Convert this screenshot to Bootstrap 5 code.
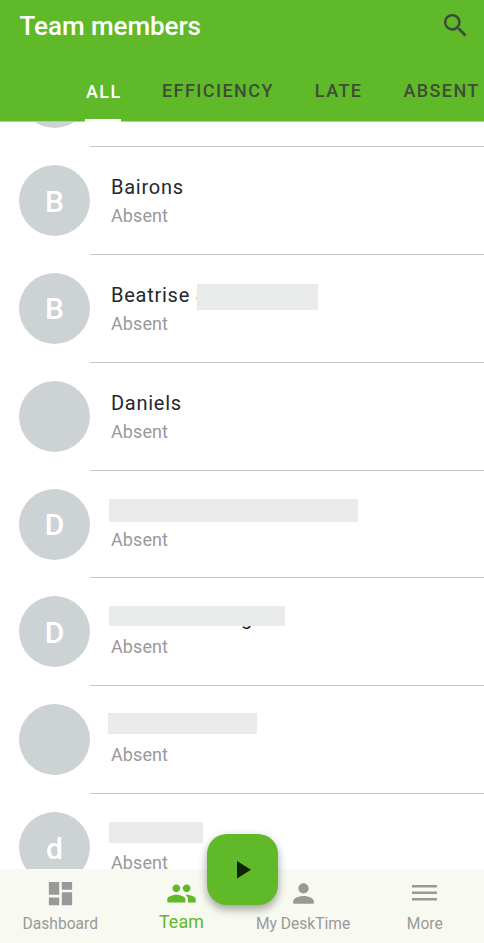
<!DOCTYPE html>
<html lang="en">
<head>
<meta charset="utf-8">
<meta name="viewport" content="width=device-width, initial-scale=1">
<title>Team members</title>
<link href="https://cdn.jsdelivr.net/npm/bootstrap@5.3.0/dist/css/bootstrap.min.css" rel="stylesheet">
<style>
body{font-family:Roboto,"Liberation Sans",sans-serif;background:#fff;color:#24272d}
.app{height:943px}
.topbar{height:122px;background:#60b929;border-bottom:1px solid #b5cba8;flex:none}
.title-row{height:53px;padding:0 13px 0 19.5px}
.title-row h1{font-size:26px;font-weight:500;letter-spacing:-.05px;line-height:52.5px;color:#fff}
.title-row svg{margin-top:10px}
.tabs{height:69px;padding-left:85px;gap:41px;font-size:18px;font-weight:500;letter-spacing:1.42px;line-height:24px;color:#3e4d35}
.tabs a{color:inherit;padding-top:25.5px}
.tabs a.current{color:#fff;padding:27px 0 0 1px;border-bottom:3px solid #fff;width:36px;height:69px}
.members{margin-top:-82.8px}
.member{height:107.83px;padding-left:19px}
.avatar{width:71px;height:71px;margin-top:18px;padding-top:1px;background:#cdd2d5;color:#fff;font-size:30px;font-weight:500;flex:none}
.info{border-bottom:1px solid #c3c6c6;padding:25px 0 0 21px}
.person{font-size:20px;line-height:30px;letter-spacing:.74px;height:30px}
.status{font-size:18px;line-height:27px;letter-spacing:.1px;color:#999}
.mask{position:absolute;background:#e9ebea}
.m1{left:86px;top:4.3px;width:121px;height:26px}
.m2{left:-2px;top:3.8px;width:249px;height:23px}
.m3{left:-2px;top:2.8px;width:176px;height:20px}
.m4{left:-3px;top:2.3px;width:149px;height:21px}
.m5{left:-2px;top:3.3px;width:94px;height:21px}
.g-tail{padding-left:130px}
.bottombar{height:74px;background:#f8f9f0;flex:none;color:#999;font-size:15.6px;letter-spacing:0}
.bottombar a{color:inherit;width:121.7px;padding-top:9px}
.bottombar a:first-child{width:120.6px}
.bottombar span{line-height:24px;margin-top:3px}
.bottombar .active{color:#60b929;font-size:17.8px;letter-spacing:.1px}
.bottombar .active span{margin-top:1px}
.play{position:absolute;left:207px;top:834px;width:71px;height:71px;border-radius:20px;background:#60b929;box-shadow:0 5px 8px rgba(0,0,0,.28),0 1px 10px rgba(0,0,0,.1)}
</style>
<script src="https://cdn.jsdelivr.net/npm/bootstrap@5.3.0/dist/js/bootstrap.bundle.min.js"></script>
</head>
<body>
<div class="app position-relative d-flex flex-column overflow-hidden">
<header class="topbar">
<div class="title-row d-flex justify-content-between">
<h1 class="m-0">Team members</h1>
<svg width="31" height="31" viewBox="0 0 24 24" fill="#3e4d35"><path d="M15.5 14h-.79l-.28-.27A6.47 6.47 0 0 0 16 9.5 6.5 6.5 0 1 0 9.5 16c1.61 0 3.09-.59 4.23-1.57l.27.28v.79l5 4.99L20.49 19zm-6 0C7.01 14 5 11.99 5 9.5S7.01 5 9.5 5 14 7.01 14 9.5 11.99 14 9.5 14z"/></svg>
</div>
<nav class="tabs d-flex text-nowrap overflow-hidden">
<a class="text-decoration-none current flex-shrink-0" href="#">ALL</a>
<a class="text-decoration-none" href="#">EFFICIENCY</a>
<a class="text-decoration-none" href="#">LATE</a>
<a class="text-decoration-none" href="#">ABSENT</a>
</nav>
</header>
<main class="flex-grow-1 overflow-hidden">
<div class="members">
<div class="member d-flex"><div class="avatar rounded-circle"></div><div class="info flex-grow-1"></div></div>
<div class="member d-flex"><div class="avatar rounded-circle d-flex align-items-center justify-content-center">B</div><div class="info flex-grow-1"><div class="person">Bairons</div><div class="status">Absent</div></div></div>
<div class="member d-flex"><div class="avatar rounded-circle d-flex align-items-center justify-content-center">B</div><div class="info flex-grow-1"><div class="person position-relative">Beatrise S<div class="mask m1"></div></div><div class="status">Absent</div></div></div>
<div class="member d-flex"><div class="avatar rounded-circle"></div><div class="info flex-grow-1"><div class="person">Daniels</div><div class="status">Absent</div></div></div>
<div class="member d-flex"><div class="avatar rounded-circle d-flex align-items-center justify-content-center">D</div><div class="info flex-grow-1"><div class="person position-relative"><div class="mask m2"></div></div><div class="status">Absent</div></div></div>
<div class="member d-flex"><div class="avatar rounded-circle d-flex align-items-center justify-content-center">D</div><div class="info flex-grow-1"><div class="person position-relative g-tail">g<div class="mask m3"></div></div><div class="status">Absent</div></div></div>
<div class="member d-flex"><div class="avatar rounded-circle"></div><div class="info flex-grow-1"><div class="person position-relative"><div class="mask m4"></div></div><div class="status">Absent</div></div></div>
<div class="member d-flex"><div class="avatar rounded-circle d-flex align-items-center justify-content-center">d</div><div class="info flex-grow-1"><div class="person position-relative"><div class="mask m5"></div></div><div class="status">Absent</div></div></div>
</div>
</main>
<nav class="bottombar d-flex text-nowrap">
<a href="#" class="d-flex flex-column align-items-center text-decoration-none flex-shrink-0"><svg width="31" height="31" viewBox="0 0 24 24" fill="currentColor"><path d="M3 13h8V3H3zm0 8h8v-6H3zm10 0h8V11h-8zm0-18v6h8V3z"/></svg><span>Dashboard</span></a>
<a href="#" class="active d-flex flex-column align-items-center text-decoration-none flex-shrink-0"><svg width="31" height="31" viewBox="0 0 24 24" fill="currentColor"><path d="M16 11c1.66 0 2.99-1.34 2.99-3S17.66 5 16 5s-3 1.34-3 3 1.34 3 3 3zm-8 0c1.66 0 2.99-1.34 2.99-3S9.66 5 8 5 5 6.34 5 8s1.34 3 3 3zm0 2c-2.33 0-7 1.17-7 3.5V19h14v-2.5C15 14.17 10.33 13 8 13zm8 0c-.29 0-.62.02-.97.05 1.16.84 1.97 1.97 1.97 3.45V19h6v-2.5c0-2.33-4.67-3.5-7-3.5z"/></svg><span>Team</span></a>
<a href="#" class="d-flex flex-column align-items-center text-decoration-none flex-shrink-0"><svg width="31" height="31" viewBox="0 0 24 24" fill="currentColor"><path d="M12 12c2.21 0 4-1.79 4-4s-1.79-4-4-4-4 1.79-4 4 1.79 4 4 4zm0 2c-2.67 0-8 1.34-8 4v2h16v-2c0-2.66-5.33-4-8-4z"/></svg><span>My DeskTime</span></a>
<a href="#" class="d-flex flex-column align-items-center text-decoration-none flex-shrink-0"><svg width="31" height="31" viewBox="0 0 31 31" fill="currentColor"><path d="M3 7h25v2.5H3zm0 6.5h25V16H3zM3 20h25v2.5H3z"/></svg><span>More</span></a>
</nav>
<button class="play border-0 p-0 d-flex align-items-center justify-content-center" aria-label="Start"><svg width="31" height="31" viewBox="0 0 31 31"><path d="M10 7v17.5L24 15.75z" fill="#0d2405"/></svg></button>
</div>
</body>
</html>
